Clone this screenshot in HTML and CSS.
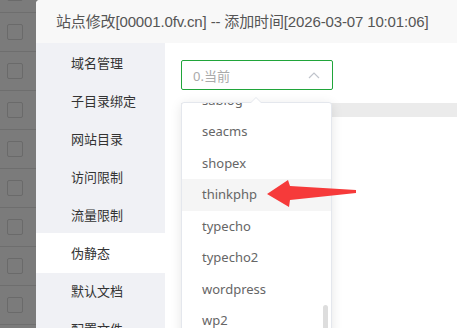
FILE: index.html
```html
<!DOCTYPE html>
<html lang="zh">
<head>
<meta charset="utf-8">
<title>站点修改</title>
<link rel="stylesheet" href="styles.css">
</head>
<body>
<div class="page">
  <div class="table">
    <div class="row"><span class="cb"></span></div>
    <div class="row"><span class="cb"></span></div>
    <div class="row"><span class="cb"></span></div>
    <div class="row"><span class="cb"></span></div>
    <div class="row"><span class="cb"></span></div>
    <div class="row"><span class="cb"></span></div>
    <div class="row"><span class="cb"></span></div>
    <div class="row"><span class="cb"></span></div>
    <div class="row"><span class="cb"></span></div>
  </div>
  <div class="modal">
    <div class="header">站点修改[00001.0fv.cn] -- 添加时间[2026-03-07 10:01:06]</div>
    <div class="body">
      <ul class="sidebar">
        <li>域名管理</li>
        <li>子目录绑定</li>
        <li>网站目录</li>
        <li>访问限制</li>
        <li>流量限制</li>
        <li class="active">伪静态</li>
        <li>默认文档</li>
        <li>配置文件</li>
      </ul>
      <div class="content">
        <div class="select">
          <span class="placeholder">0.当前</span>
          <svg class="chev" width="12" height="8" viewBox="0 0 12 8"><polyline points="1,7 6,2 11,7" fill="none" stroke="#c0c4cc" stroke-width="1.2"/></svg>
        </div>
        <div class="editor-bar"></div>
        <div class="dropdown">
          <span class="caret"></span>
          <div class="viewport">
            <ul class="options">
              <li>sablog</li>
              <li>seacms</li>
              <li>shopex</li>
              <li class="hover">thinkphp</li>
              <li>typecho</li>
              <li>typecho2</li>
              <li>wordpress</li>
              <li>wp2</li>
              <li>zblog</li>
            </ul>
          </div>
          <span class="scrollbar"></span>
        </div>
      </div>
    </div>
  </div>
  <svg class="arrow" width="457" height="328" viewBox="0 0 457 328">
    <polygon points="267,194 288,180 290,186 356,190 356,193 290,200 289,207" fill="#f63a3a"/>
  </svg>
</div>
</body>
</html>
```

FILE: styles.css
```css
html, body {
  margin: 0;
  padding: 0;
}
body {
  width: 457px;
  height: 328px;
  overflow: hidden;
  background: #7b7b7b;
  font-family: "Noto Sans", "Noto Sans CJK SC", sans-serif;
}
ul {
  list-style: none;
  margin: 0;
  padding: 0;
}
.page {
  position: relative;
  display: flex;
  width: 457px;
  height: 328px;
}
.table {
  width: 36px;
  flex: none;
  margin-top: -26px;
}
.row {
  height: 38px;
  border-bottom: 1px solid #6e6e6e;
  display: flex;
  align-items: center;
  padding-left: 7px;
}
.cb {
  width: 14px;
  height: 14px;
  border: 1px solid #6a6a6a;
  border-radius: 2px;
  box-sizing: content-box;
}
.modal {
  flex: 1;
  min-width: 0;
  display: flex;
  flex-direction: column;
  background: #fff;
  border-top-left-radius: 4px;
  overflow: hidden;
}
.header {
  height: 43px;
  flex: none;
  background: #f8f8f8;
  padding-left: 20px;
  line-height: 43px;
  font-size: 15px;
  font-family: "Liberation Sans", "Noto Sans CJK SC", sans-serif;
  color: #555;
  white-space: nowrap;
  letter-spacing: -0.14px;
}
.body {
  flex: 1;
  display: flex;
  min-height: 0;
}
.sidebar {
  width: 129px;
  flex: none;
  background: #f0f1f5;
  padding-top: 1px;
}
.sidebar li {
  height: 38px;
  line-height: 38px;
  padding-left: 35px;
  font-size: 13px;
  color: #333;
}
.sidebar li.active {
  background: #fff;
  height: 40px;
  line-height: 40px;
  margin-top: -1px;
  margin-bottom: -1px;
}
.content {
  flex: 1;
  position: relative;
  padding: 17px 0 0 16px;
  min-width: 0;
}
.select {
  height: 28px;
  border: 1px solid #20a53a;
  border-radius: 2px;
  display: flex;
  align-items: center;
  justify-content: space-between;
  padding: 0 12px 0 11px;
  box-sizing: content-box;
  width: 127px;
}
.placeholder {
  font-size: 13px;
  color: #aaa;
}
.chev {
  display: block;
}
.editor-bar {
  margin-top: 13px;
  height: 14px;
  background: #ebebeb;
}
.dropdown {
  position: absolute;
  left: 16px;
  top: 59px;
  width: 149px;
  height: 240px;
  background: #fff;
  border: 1px solid #e4e7ed;
  border-radius: 3px;
  box-shadow: 0 2px 12px rgba(0, 0, 0, 0.1);
}
.caret {
  position: absolute;
  left: 68px;
  top: -6px;
  width: 0;
  height: 0;
  border-left: 6px solid transparent;
  border-right: 6px solid transparent;
  border-bottom: 6px solid #e4e7ed;
}
.caret::after {
  content: "";
  position: absolute;
  left: -5px;
  top: 1px;
  border-left: 5px solid transparent;
  border-right: 5px solid transparent;
  border-bottom: 5px solid #fff;
}
.viewport {
  height: 100%;
  overflow: hidden;
}
.options {
  margin-top: -18.5px;
}
.options li {
  height: 31.5px;
  line-height: 31.5px;
  padding-left: 20px;
  font-size: 13px;
  color: #666;
}
.options li.hover {
  background: #f5f5f5;
}
.scrollbar {
  position: absolute;
  right: 3px;
  top: 202px;
  width: 5px;
  height: 60px;
  border-radius: 3px;
  background: #dddddd;
}
.arrow {
  position: absolute;
  left: 0;
  top: 0;
  pointer-events: none;
}
```
